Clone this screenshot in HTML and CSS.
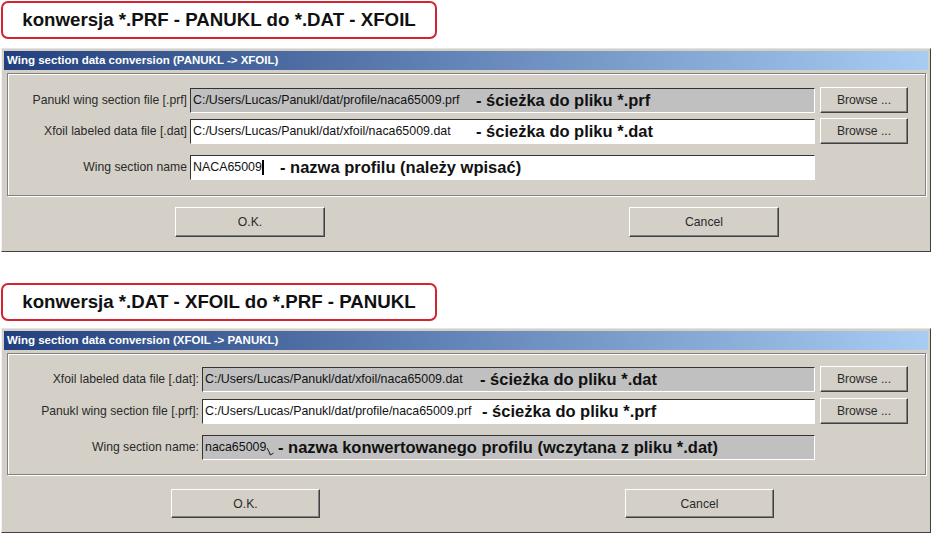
FILE: index.html
```html
<!DOCTYPE html>
<html lang="pl">
<head>
<meta charset="utf-8">
<title>Konwersja profili</title>
<link rel="stylesheet" href="styles.css">
</head>
<body>
<div class="page">
  <div class="callout">konwersja *.PRF - PANUKL do *.DAT - XFOIL</div>
  <div class="window w1">
    <div class="titlebar">Wing section data conversion (PANUKL -&gt; XFOIL)</div>
    <div class="group">
      <div class="row">
        <div class="label">Panukl wing section file [.prf]</div>
        <div class="field gray"><span class="val v1a">C:/Users/Lucas/Panukl/dat/profile/naca65009.prf</span><span class="note">- ścieżka do pliku *.prf</span></div>
        <div class="btn browse">Browse ...</div>
      </div>
      <div class="row">
        <div class="label">Xfoil labeled data file [.dat]</div>
        <div class="field"><span class="val v1b">C:/Users/Lucas/Panukl/dat/xfoil/naca65009.dat</span><span class="note">- ścieżka do pliku *.dat</span></div>
        <div class="btn browse">Browse ...</div>
      </div>
      <div class="row name">
        <div class="label">Wing section name</div>
        <div class="field"><span class="val v1c">NACA65009<span class="caret"></span></span><span class="note">- nazwa profilu (należy wpisać)</span></div>
        <div class="spacer"></div>
      </div>
    </div>
    <div class="actions">
      <div class="btn action">O.K.</div>
      <div class="btn action">Cancel</div>
    </div>
  </div>

  <div class="callout callout-2">konwersja *.DAT - XFOIL do *.PRF - PANUKL</div>
  <div class="window w2">
    <div class="titlebar">Wing section data conversion (XFOIL -&gt; PANUKL)</div>
    <div class="group">
      <div class="row">
        <div class="label">Xfoil labeled data file [.dat]:</div>
        <div class="field gray"><span class="val v2a">C:/Users/Lucas/Panukl/dat/xfoil/naca65009.dat</span><span class="note">- ścieżka do pliku *.dat</span></div>
        <div class="btn browse">Browse ...</div>
      </div>
      <div class="row">
        <div class="label">Panukl wing section file [.prf]:</div>
        <div class="field"><span class="val v2b">C:/Users/Lucas/Panukl/dat/profile/naca65009.prf</span><span class="note">- ścieżka do pliku *.prf</span></div>
        <div class="btn browse">Browse ...</div>
      </div>
      <div class="row name">
        <div class="label">Wing section name:</div>
        <div class="field gray"><span class="val v2c">naca65009<svg class="pointer" width="8" height="9" viewBox="0 0 8 9"><path d="M1 1 L4.5 7.5 M3 6.5 L4.5 8 L7.5 6" fill="none" stroke="#222" stroke-width="1"/></svg></span><span class="note">- nazwa konwertowanego profilu (wczytana z pliku *.dat)</span></div>
        <div class="spacer"></div>
      </div>
    </div>
    <div class="actions">
      <div class="btn action">O.K.</div>
      <div class="btn action">Cancel</div>
    </div>
  </div>
</div>
</body>
</html>
```
FILE: styles.css
```css
html, body {
  margin: 0;
  padding: 0;
  background: #ffffff;
}
body {
  font-family: "Liberation Sans", Arial, sans-serif;
}
.page {
  width: 932px;
  overflow: hidden;
}
.callout {
  margin: 1px 0 0 1px;
  width: 436px;
  height: 38px;
  box-sizing: border-box;
  border: 2px solid #d42230;
  border-radius: 7px;
  display: flex;
  align-items: center;
  justify-content: center;
  font-weight: bold;
  font-size: 18.7px;
  color: #111111;
  background: #ffffff;
}
.callout-2 {
  margin-top: 31px;
}
.window {
  margin-top: 9px;
  margin-left: 1px;
  width: 930px;
  box-sizing: border-box;
  background: #d4d0c8;
  border: 1px solid;
  border-color: #e6e4df #404040 #404040 #f2f2f2;
  padding: 2px;
}
.w2 {
  margin-top: 7px;
}
.titlebar {
  height: 19px;
  background: linear-gradient(to right, #22407e, #a8ccf2);
  color: #ffffff;
  font-weight: bold;
  font-size: 11.5px;
  line-height: 19px;
  padding-left: 3px;
  white-space: nowrap;
}
.group {
  margin: 3px 2px 0 3px;
  border: 1px solid #808080;
  box-shadow: inset 1px 1px 0 #ffffff, 1px 1px 0 #ffffff;
  padding: 13px 17px 15px 0;
}
.w2 .group {
  padding-top: 12px;
  padding-bottom: 14px;
}
.row {
  display: flex;
  align-items: center;
  height: 26px;
}
.row + .row {
  margin-top: 5px;
}
.w2 .row + .row {
  margin-top: 6px;
}
.row.name,
.w2 .row.name {
  margin-top: 10px;
}
.label {
  width: 179px;
  flex: none;
  margin-right: 3px;
  text-align: right;
  font-size: 12.2px;
  color: #2a2a2a;
  white-space: nowrap;
}
.w2 .label {
  width: 191px;
}
.field {
  flex: 1;
  height: 25px;
  box-sizing: border-box;
  border: 1px solid;
  border-color: #333333 #ffffff #ffffff #333333;
  background: #ffffff;
  display: flex;
  align-items: center;
  padding-left: 2px;
  overflow: hidden;
  white-space: nowrap;
}
.field.gray {
  background: #c0c0c0;
}
.val {
  flex: none;
  font-size: 12.4px;
  color: #111111;
  display: flex;
  align-items: center;
}
.v1a, .v1b { width: 283px; }
.v1c { width: 87px; }
.v2a { width: 275px; }
.v2b { width: 277px; }
.v2c { width: 73px; }
.caret {
  display: inline-block;
  width: 2px;
  height: 15px;
  margin-left: 0;
  background: #000000;
}
.pointer {
  margin-top: 8px;
}
.note {
  font-size: 16.5px;
  font-weight: bold;
  color: #111111;
}
.btn {
  box-sizing: border-box;
  border: 1px solid;
  border-color: #ffffff #404040 #404040 #ffffff;
  box-shadow: inset -1px -1px 0 #808080;
  background: #d4d0c8;
  display: flex;
  align-items: center;
  justify-content: center;
  font-size: 12.2px;
  color: #2a2a2a;
  flex: none;
}
.browse {
  width: 88px;
  height: 26px;
  margin-left: 5px;
}
.spacer {
  width: 93px;
  flex: none;
}
.actions {
  display: flex;
  padding: 11px 0 12px 171px;
  gap: 304px;
}
.action {
  width: 150px;
  height: 30px;
}
.w2 .actions {
  padding: 14px 0 12px 167px;
  gap: 305px;
}
.w2 .action {
  width: 149px;
  height: 29px;
}
```
